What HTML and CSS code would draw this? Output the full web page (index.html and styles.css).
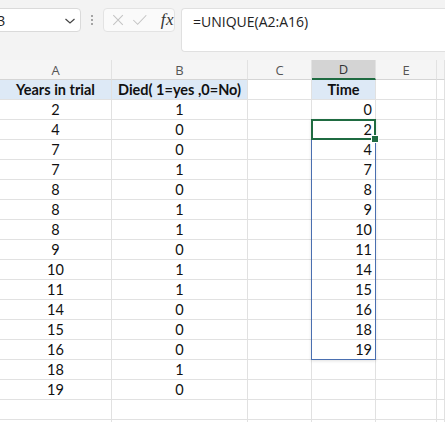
FILE: index.html
```html
<!DOCTYPE html>
<html>
<head>
<meta charset="utf-8">
<link rel="stylesheet" href="styles.css">
</head>
<body>
<div class="app">
  <div class="toolbar">
    <div class="namebox">
      <span class="nb-text">D3</span>
      <svg class="chev" width="12" height="8" viewBox="0 0 12 8"><path d="M1.5 2 L6 6 L10.5 2" fill="none" stroke="#444" stroke-width="1.2"/></svg>
    </div>
    <div class="dots"><span></span><span></span><span></span></div>
    <div class="fbuttons">
      <svg width="14" height="14" viewBox="0 0 14 14"><path d="M1.5 1.5 L12.5 12.5 M12.5 1.5 L1.5 12.5" stroke="#c4c4c4" stroke-width="1.2" fill="none"/></svg>
      <svg width="18" height="14" viewBox="0 0 18 14"><path d="M1.5 7 L6.5 12 L16.5 1.5" stroke="#c4c4c4" stroke-width="1.2" fill="none"/></svg>
      <span class="fx">fx</span>
    </div>
    <div class="formula">=UNIQUE(A2:A16)</div>
  </div>
  <div class="sheet">
    <div class="grid">
      <div class="ch">A</div><div class="ch">B</div><div class="ch">C</div><div class="ch sel">D</div><div class="ch">E</div><div class="ch last"></div>

      <div class="c th">Years in trial</div><div class="c th">Died( 1=yes ,0=No)</div><div class="c"></div><div class="c th">Time</div><div class="c"></div><div class="c"></div>

      <div class="c m">2</div><div class="c m">1</div><div class="c"></div><div class="c r">0</div><div class="c"></div><div class="c"></div>
      <div class="c m">4</div><div class="c m">0</div><div class="c"></div><div class="c r">2</div><div class="c"></div><div class="c"></div>
      <div class="c m">7</div><div class="c m">0</div><div class="c"></div><div class="c r">4</div><div class="c"></div><div class="c"></div>
      <div class="c m">7</div><div class="c m">1</div><div class="c"></div><div class="c r">7</div><div class="c"></div><div class="c"></div>
      <div class="c m">8</div><div class="c m">0</div><div class="c"></div><div class="c r">8</div><div class="c"></div><div class="c"></div>
      <div class="c m">8</div><div class="c m">1</div><div class="c"></div><div class="c r">9</div><div class="c"></div><div class="c"></div>
      <div class="c m">8</div><div class="c m">1</div><div class="c"></div><div class="c r">10</div><div class="c"></div><div class="c"></div>
      <div class="c m">9</div><div class="c m">0</div><div class="c"></div><div class="c r">11</div><div class="c"></div><div class="c"></div>
      <div class="c m">10</div><div class="c m">1</div><div class="c"></div><div class="c r">14</div><div class="c"></div><div class="c"></div>
      <div class="c m">11</div><div class="c m">1</div><div class="c"></div><div class="c r">15</div><div class="c"></div><div class="c"></div>
      <div class="c m">14</div><div class="c m">0</div><div class="c"></div><div class="c r">16</div><div class="c"></div><div class="c"></div>
      <div class="c m">15</div><div class="c m">0</div><div class="c"></div><div class="c r">18</div><div class="c"></div><div class="c"></div>
      <div class="c m">16</div><div class="c m">0</div><div class="c"></div><div class="c r">19</div><div class="c"></div><div class="c"></div>
      <div class="c m">18</div><div class="c m">1</div><div class="c"></div><div class="c"></div><div class="c"></div><div class="c"></div>
      <div class="c m">19</div><div class="c m">0</div><div class="c"></div><div class="c"></div><div class="c"></div><div class="c"></div>
      <div class="c"></div><div class="c"></div><div class="c"></div><div class="c"></div><div class="c"></div><div class="c"></div>
      <div class="c"></div><div class="c"></div><div class="c"></div><div class="c"></div><div class="c"></div><div class="c"></div>
    </div>
    <div class="spill"></div>
    <div class="active"><div class="handle"></div></div>
  </div>
</div>
</body>
</html>
```

FILE: styles.css
```css
html, body {
  margin: 0;
  padding: 0;
  background: #ffffff;
  overflow: hidden;
}
.app {
  width: 445px;
  height: 422px;
  overflow: hidden;
  font-family: "Open Sans", "Noto Sans", sans-serif;
}
.toolbar {
  height: 60px;
  background: #f3f3f3;
  display: flex;
  align-items: flex-start;
  padding-top: 8px;
  box-sizing: border-box;
}
.namebox {
  margin-left: -24px;
  width: 105px;
  height: 24px;
  box-sizing: border-box;
  background: #fff;
  border: 1px solid #dadada;
  border-radius: 4px;
  display: flex;
  align-items: center;
  justify-content: space-between;
  padding: 0 4px 0 10px;
  font-size: 14px;
  color: #222;
}
.chev { margin-top: 1px; }
.dots {
  width: 22px;
  height: 24px;
  display: flex;
  flex-direction: column;
  align-items: center;
  justify-content: center;
  gap: 2px;
}
.dots span {
  width: 2px;
  height: 2px;
  background: #8a8a8a;
  border-radius: 1px;
}
.fbuttons {
  width: 72px;
  height: 24px;
  box-sizing: border-box;
  background: #fafafa;
  border: 1px solid #e3e3e3;
  border-radius: 4px;
  display: flex;
  align-items: center;
  padding-left: 8px;
  gap: 8px;
}
.fx {
  font-family: "Liberation Serif", serif;
  font-style: italic;
  font-size: 17px;
  color: #333;
  margin-left: 5px;
  letter-spacing: 0.5px;
}
.formula {
  margin-left: 6px;
  flex: 1;
  height: 44px;
  box-sizing: border-box;
  background: #fff;
  border: 1px solid #e0e0e0;
  border-right: none;
  border-radius: 4px 0 0 4px;
  padding: 3px 0 0 11px;
  font-size: 14px;
  color: #222;
}
.sheet {
  position: relative;
}
.grid {
  display: grid;
  grid-template-columns: 112px 136px 64px 64px 61px 8px;
  grid-auto-rows: 20px;
}
.ch {
  background: #f5f5f5;
  border-right: 1px solid #e2e2e2;
  border-bottom: 1px solid #d5d5d5;
  box-sizing: border-box;
  font-family: "Open Sans", sans-serif;
  font-size: 13px;
  color: #555;
  display: flex;
  align-items: center;
  justify-content: center;
}
.ch.sel {
  background: #d4d4d4;
  color: #333;
  border-bottom: 2px solid #1f6b41;
}
.c {
  border-right: 1px solid #e1e1e1;
  border-bottom: 1px solid #e1e1e1;
  box-sizing: border-box;
  font-family: "Lato", "Open Sans", sans-serif;
  font-size: 14.5px;
  color: #111;
  display: flex;
  align-items: center;
  white-space: nowrap;
  overflow: hidden;
}
.th {
  background: #dde9f6;
  font-weight: 700;
  justify-content: center;
}
.m { justify-content: center; }
.r { justify-content: flex-end; padding-right: 3px; }
.spill {
  position: absolute;
  left: 311px;
  top: 59px;
  width: 65px;
  height: 241px;
  box-sizing: border-box;
  border: 1px solid #4a6fb0;
  box-shadow: 0 1px 3px rgba(0,0,0,0.12);
}
.active {
  position: absolute;
  left: 311px;
  top: 59px;
  width: 65px;
  height: 21px;
  box-sizing: border-box;
  border: 2px solid #1f6b41;
}
.handle {
  position: absolute;
  right: -5px;
  bottom: -5px;
  width: 6px;
  height: 6px;
  background: #1f6b41;
  border: 1px solid #fff;
}
```
